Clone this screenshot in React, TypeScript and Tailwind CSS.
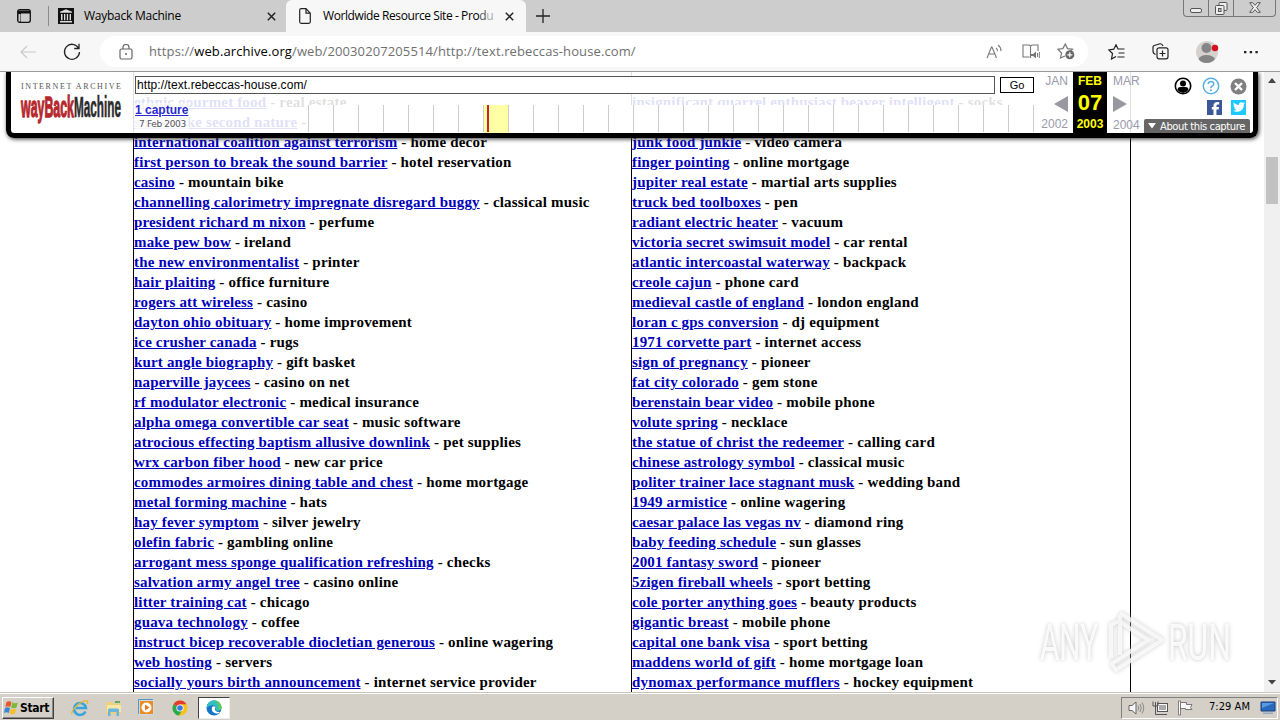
import { FC } from "react";
import { FaFacebookF, FaTwitter } from "react-icons/fa6";

type Entry = [string, string];

const leftLinks: Entry[] = [
  ["ethnic gourmet food", "real estate"],
  ["smells like second nature", "real estate"],
  ["international coalition against terrorism", "home decor"],
  ["first person to break the sound barrier", "hotel reservation"],
  ["casino", "mountain bike"],
  ["channelling calorimetry impregnate disregard buggy", "classical music"],
  ["president richard m nixon", "perfume"],
  ["make pew bow", "ireland"],
  ["the new environmentalist", "printer"],
  ["hair plaiting", "office furniture"],
  ["rogers att wireless", "casino"],
  ["dayton ohio obituary", "home improvement"],
  ["ice crusher canada", "rugs"],
  ["kurt angle biography", "gift basket"],
  ["naperville jaycees", "casino on net"],
  ["rf modulator electronic", "medical insurance"],
  ["alpha omega convertible car seat", "music software"],
  ["atrocious effecting baptism allusive downlink", "pet supplies"],
  ["wrx carbon fiber hood", "new car price"],
  ["commodes armoires dining table and chest", "home mortgage"],
  ["metal forming machine", "hats"],
  ["hay fever symptom", "silver jewelry"],
  ["olefin fabric", "gambling online"],
  ["arrogant mess sponge qualification refreshing", "checks"],
  ["salvation army angel tree", "casino online"],
  ["litter training cat", "chicago"],
  ["guava technology", "coffee"],
  ["instruct bicep recoverable diocletian generous", "online wagering"],
  ["web hosting", "servers"],
  ["socially yours birth announcement", "internet service provider"],
];

const rightLinks: Entry[] = [
  ["insignificant quarrel enthusiast beaver intelligent", "socks"],
  ["winter coat", "travel"],
  ["junk food junkie", "video camera"],
  ["finger pointing", "online mortgage"],
  ["jupiter real estate", "martial arts supplies"],
  ["truck bed toolboxes", "pen"],
  ["radiant electric heater", "vacuum"],
  ["victoria secret swimsuit model", "car rental"],
  ["atlantic intercoastal waterway", "backpack"],
  ["creole cajun", "phone card"],
  ["medieval castle of england", "london england"],
  ["loran c gps conversion", "dj equipment"],
  ["1971 corvette part", "internet access"],
  ["sign of pregnancy", "pioneer"],
  ["fat city colorado", "gem stone"],
  ["berenstain bear video", "mobile phone"],
  ["volute spring", "necklace"],
  ["the statue of christ the redeemer", "calling card"],
  ["chinese astrology symbol", "classical music"],
  ["politer trainer lace stagnant musk", "wedding band"],
  ["1949 armistice", "online wagering"],
  ["caesar palace las vegas nv", "diamond ring"],
  ["baby feeding schedule", "sun glasses"],
  ["2001 fantasy sword", "pioneer"],
  ["5zigen fireball wheels", "sport betting"],
  ["cole porter anything goes", "beauty products"],
  ["gigantic breast", "mobile phone"],
  ["capital one bank visa", "sport betting"],
  ["maddens world of gift", "home mortgage loan"],
  ["dynomax performance mufflers", "hockey equipment"],
];

const CloseX: FC = () => (
  <svg width="9" height="9" viewBox="0 0 9 9" className="shrink-0">
    <path d="M.8.8l7.4 7.4M8.2.8L.8 8.2" stroke="#222" strokeWidth="1.5" />
  </svg>
);

const TabStrip: FC = () => (
  <div className="h-8 shrink-0 bg-[#cdcdcd] flex text-[12px] text-black">
    <div className="w-[48px] flex items-center pl-[17px]">
      <svg width="14" height="14" viewBox="0 0 14 14">
        <rect x=".7" y=".7" width="12.6" height="12.6" rx="2" fill="none" stroke="#111" strokeWidth="1.3" />
        <path d="M1 1.5h12v3H1zM1 4h3v9H1z" fill="#111" />
        <path d="M1.5 5h2v7.5h-2z" fill="#cdcdcd" />
      </svg>
    </div>
    <div className="w-[238px] flex items-center border-l border-[#8c8c8c] my-[6px] pl-[9px]">
      <svg width="16" height="16" viewBox="0 0 16 16" className="shrink-0">
        <path d="M0 0h16v16H0z" fill="#111" />
        <path d="M8 1.3l6 2.5v1H2v-1zM2 13h12v1.5H2zM3 6h1.5v6.3H3zM6 6h1.3v6.3H6zM8.800 6h1.300v6.300H8.800zM11.600 6H13v6.300h-1.400z" fill="#ddd" />
      </svg>
      <span className="ml-[10px] w-[183px] tracking-[-0.25px]">Wayback Machine</span>
      <CloseX />
    </div>
    <div className="w-[240px] bg-[#f7f7f7] rounded-t-[6px] flex items-center pl-[13px]">
      <svg width="12" height="16" viewBox="0 0 12 16" className="shrink-0">
        <path d="M.7 2.200Q.7.700 2.200.700H7l4.300 4.500v8.600q0 1.500-1.500 1.500H2.200Q.7 15.300.7 13.800zM7 .7V5.200h4.300" fill="none" stroke="#222" strokeWidth="1.2" />
      </svg>
      <span className="ml-3 w-[182px] whitespace-nowrap tracking-[-0.41px]">
        Worldwide Resource Site - Pro
        <span className="text-[#555]">d</span>
        <span className="text-[#aaa]">u</span>
      </span>
      <CloseX />
    </div>
    <svg width="14" height="14" viewBox="0 0 14 14" className="mt-[9px] ml-[10px]">
      <path d="M7 0v14M0 7h14" stroke="#222" strokeWidth="1.3" />
    </svg>
    <div className="ml-auto mr-[4px] h-[17px] w-[93px] flex border border-t-0 border-[#777] rounded-b-[4px]">
      <div className="w-[25px] border-r border-[#777] flex justify-center">
        <svg width="12" height="5" viewBox="0 0 12 5" className="mt-2">
          <rect x=".5" y=".5" width="11" height="4" rx="1.5" fill="#eee" stroke="#555" />
        </svg>
      </div>
      <div className="w-[25px] border-r border-[#777] flex justify-center">
        <svg width="13" height="13" viewBox="0 0 13 13" className="mt-[2px]">
          <path d="M4 3V1.500Q4 .5 5 .5h6q1 0 1 1v6q0 1-1 1H9" fill="#eee" stroke="#555" />
          <rect x=".5" y="3.5" width="8.5" height="9" rx="1" fill="#eee" stroke="#555" />
          <rect x="3.5" y="6.5" width="2.5" height="3" fill="#ccc" stroke="#555" />
        </svg>
      </div>
      <div className="flex-1 flex justify-center">
        <svg width="12" height="11" viewBox="0 0 12 11" className="mt-[2px]">
          <path d="M.7.7h3L6 3.300 8.300.7h3L7.700 5.500l3.600 4.800h-3L6 7.700l-2.300 2.600h-3l3.600-4.800z" fill="#eee" stroke="#555" />
        </svg>
      </div>
    </div>
  </div>
);

const Toolbar: FC = () => (
  <div className="h-10 shrink-0 bg-[#f7f7f7] border-b border-[#999] flex items-center">
    <svg width="17" height="14" viewBox="0 0 17 14" className="ml-5">
      <path d="M16 7H1M7 1L1 7l6 6" fill="none" stroke="#c8c8c8" strokeWidth="1.2" />
    </svg>
    <svg width="18" height="18" viewBox="0 0 18 18" className="ml-[26px]">
      <path d="M15.500 5A7.500 7.500 0 1 0 16.500 9M16 .8V5.500h-4.800" fill="none" stroke="#222" strokeWidth="1.3" />
    </svg>
    <div className="ml-[19px] w-[988px] h-[31px] rounded-full bg-white flex items-center">
      <svg width="14" height="16" viewBox="0 0 14 16" className="ml-[19px] shrink-0">
        <rect x="1" y="5" width="12" height="10" rx="1.5" fill="none" stroke="#666" strokeWidth="1.2" />
        <path d="M4 5V3.500a3 3 0 0 1 6 0V5" fill="none" stroke="#666" strokeWidth="1.2" />
        <circle cx="7" cy="10" r="1" fill="#666" />
      </svg>
      <span className="ml-4 w-[837px] text-[13px] text-[#707070] whitespace-nowrap tracking-[0.11px]">
        https://<span className="text-black">web.archive.org</span>/web/20030207205514/http://text.rebeccas-house.com/
      </span>
      <svg width="16" height="15" viewBox="0 0 16 15" className="shrink-0">
        <path d="M1 14L5.500 3h.5l4.500 11M2.800 10h6M10 4q1.500 1 1.500 3M12 1q3 2 3 6" fill="none" stroke="#777" strokeWidth="1.1" />
      </svg>
      <svg width="18" height="16" viewBox="0 0 18 16" className="ml-5 shrink-0">
        <path d="M7.500 13H1V1h6l1.500 1L10 1h6v6M8.500 2v12" fill="none" stroke="#777" strokeWidth="1.1" />
        <path d="M9 10h2l3-2.500v7L11 12H9z" fill="#777" />
        <path d="M15.500 9v4M17.300 8v6" stroke="#777" />
      </svg>
      <svg width="18" height="17" viewBox="0 0 18 17" className="ml-[17px] shrink-0">
        <path d="M8 13l-4.500 2 1-5L.8 6.200l5-.6L8.300 1l2.200 4.600 5 .6-2 2" fill="none" stroke="#777" strokeWidth="1.2" />
        <circle cx="12.8" cy="11.8" r="4.5" fill="#666" />
        <path d="M12.800 9.300v5M10.300 11.800h5" stroke="#fff" strokeWidth="1.2" />
      </svg>
    </div>
    <svg width="18" height="16" viewBox="0 0 18 16" className="ml-5 shrink-0">
      <path d="M8 12.500L3.500 15l1-5.500L.8 6l5-.8L8 .8l2 4.200h6.500M10.500 9h6M9.500 13h7" fill="none" stroke="#222" strokeWidth="1.2" />
    </svg>
    <svg width="17" height="17" viewBox="0 0 17 17" className="ml-[26px] shrink-0">
      <path d="M3.500 11.500Q1 10.500 1 8V4.500Q.8 3 2.300 2.500L8 .8Q10 .5 11 3" fill="none" stroke="#222" strokeWidth="1.2" />
      <rect x="5" y="4.8" width="11" height="11" rx="2" fill="none" stroke="#222" strokeWidth="1.2" />
      <path d="M10.500 7.500v6M7.500 10.500h6" stroke="#222" strokeWidth="1.2" />
    </svg>
    <svg width="24" height="24" viewBox="0 0 24 24" className="ml-[26px] shrink-0">
      <circle cx="12" cy="12" r="11" fill="#d4d1ce" />
      <circle cx="11.5" cy="8" r="5" fill="#858585" />
      <path d="M3.500 19q2-4 8-4t8.500 4q-3 4-8.500 4t-8-4z" fill="#858585" />
      <circle cx="20" cy="8" r="3.2" fill="#d4101c" />
    </svg>
    <svg width="14" height="4" viewBox="0 0 14 4" className="ml-[25px] shrink-0">
      <path d="M0 1h2.400v2.300H0zM5.700 1h2.400v2.300H5.700zM11.400 1h2.400v2.300h-2.400z" fill="#222" />
    </svg>
  </div>
);

const Column: FC<{ links: Entry[] }> = ({ links }) => (
  <div className="border-l border-black pt-5">
    {links.map(([name, topic]) => (
      <div key={name} className="h-5 leading-5 whitespace-nowrap tracking-[0.2px]">
        <span className="text-[#0000bb] underline tracking-[0.16px]">{name}</span> - {topic}
      </div>
    ))}
  </div>
);

const WaybackLogo: FC = () => (
  <svg width="103" height="44" viewBox="0 0 103 44" className="ml-[9px] mt-[9px] shrink-0">
    <text x="1" y="8" fontSize="8" textLength="100" fill="#555" fontFamily="Liberation Serif, serif">
      INTERNET ARCHIVE
    </text>
    <g fontFamily="Liberation Sans, sans-serif" fontWeight="bold" fontSize="14" transform="translate(0 35.5) scale(1 2.1)">
      <text x="1" y="0" textLength="53" lengthAdjust="spacingAndGlyphs" fill="#b5282e" stroke="#b5282e" strokeWidth=".6">
        wayBack
      </text>
      <text x="54" y="0" textLength="47" lengthAdjust="spacingAndGlyphs" fill="#2b2b2b" stroke="#2b2b2b" strokeWidth=".3">
        Machine
      </text>
    </g>
  </svg>
);

const Sparkline: FC = () => (
  <svg width="726" height="28" viewBox="0 0 726 28" className="bg-white">
    <path d="M176 0h25v28h-25z" fill="#ffffa5" />
    {Array.from({ length: 30 }, (_, i) => (
      <path key={i} d={`M${i * 25 + 0.5} 0v27`} stroke="#ccc" />
    ))}
    <path d="M180 0v27" stroke="#c8232c" strokeWidth="2" />
  </svg>
);

const Banner: FC = () => (
  <div className="absolute left-[6px] top-0 w-[1252px] h-[66px] border-[5px] border-t-0 border-black rounded-b-[8px] bg-white/88 shadow-[1px_1px_4px_#333] flex font-['Liberation_Sans',sans-serif]">
    <WaybackLogo />
    <div className="ml-3 w-[900px]">
      <div className="flex pt-1">
        <div className="w-[860px] h-[18px] border border-[#555] bg-white text-[12px] leading-[16px] pl-[1px] text-black tracking-[0.08px]">
          http://text.rebeccas-house.com/
        </div>
        <div className="ml-[5px] mt-[1px] w-[34px] h-[16px] border border-black bg-white text-[11px] leading-[14px] text-center">
          Go
        </div>
      </div>
      <div className="flex">
        <div className="w-[173px] pt-[9px]">
          <div className="w-[54px] bg-white/60">
            <div className="text-[12px] leading-[14px] font-bold underline text-[#2a2acf] whitespace-nowrap">1 capture</div>
            <div className="text-[9px] leading-[15px] pl-[4px] text-[#555] whitespace-nowrap font-['DejaVu_Sans',sans-serif] tracking-[-0.35px]">
              7 Feb 2003
            </div>
          </div>
        </div>
        <div className="pt-[11px]">
          <Sparkline />
        </div>
      </div>
    </div>
    <div className="w-[38px] flex flex-col items-end pr-[5px] text-[12px] leading-[14px] text-[#99a] pt-[2px]">
      <span>JAN</span>
      <svg width="14" height="16" viewBox="0 0 14 16" className="mt-[8px] mb-[5px]">
        <path d="M14 0v16L0 8z" fill="#9898a0" />
      </svg>
      <span>2002</span>
    </div>
    <div className="w-[34px] h-[61px] bg-black text-[#ff0] font-bold text-[12px] leading-[14px] text-center pt-[2px]">
      FEB
      <div className="text-[22px] leading-[29px]">07</div>
      2003
    </div>
    <div className="w-[31px] pl-[6px] text-[12px] leading-[14px] text-[#99a] pt-[2px]">
      MAR
      <svg width="14" height="16" viewBox="0 0 14 16" className="mt-[8px] mb-[6px]">
        <path d="M0 0v16l14-8z" fill="#9898a0" />
      </svg>
      2004
    </div>
    <div className="flex-1 flex flex-col items-end justify-between">
      <div className="flex gap-[10px] pt-[5px] pr-[6px] items-center">
        <svg width="18" height="18" viewBox="0 0 18 18">
          <circle cx="9" cy="9" r="7.7" fill="#fff" stroke="#000" strokeWidth="1.6" />
          <circle cx="9" cy="6.5" r="3" />
          <path d="M3.500 13q0-3 3-3h5q3 0 3 3-2.500 3-5.500 3t-5.500-3z" />
        </svg>
        <svg width="18" height="18" viewBox="0 0 18 18">
          <circle cx="9" cy="9" r="7.7" fill="#fff" stroke="#5aafe5" strokeWidth="1.5" />
          <path d="M6.200 7q.3-2.500 2.800-2.500T11.800 7q0 1.200-1.600 2T9 11.200" fill="none" stroke="#5aafe5" strokeWidth="1.5" />
          <circle cx="9" cy="13.3" r="1" fill="#5aafe5" />
        </svg>
        <svg width="17" height="17" viewBox="0 0 17 17">
          <circle cx="8.5" cy="8.5" r="8" fill="#808080" />
          <path d="M5 5l7 7M12 5l-7 7" stroke="#fff" strokeWidth="2.4" />
        </svg>
      </div>
      <div className="flex gap-[9px] pr-[7px]">
        <div className="w-[15px] h-[15px] bg-[#3b5998] text-white text-[13px] flex items-end justify-end overflow-hidden">
          <FaFacebookF />
        </div>
        <div className="w-[15px] h-[15px] bg-[#1dcaff] text-white text-[12px] grid place-items-center">
          <FaTwitter />
        </div>
      </div>
      <div className="mr-[3px] w-[106px] h-[14px] bg-[#666] rounded-t-[2px] text-white flex items-center text-[10px] pl-[4px] whitespace-nowrap font-['DejaVu_Sans',sans-serif] tracking-[-0.42px]">
        <svg width="8" height="6" viewBox="0 0 8 6" className="mr-[4px]">
          <path d="M0 0h8L4 5.500z" fill="#fff" />
        </svg>
        About this capture
      </div>
    </div>
  </div>
);

const Watermark: FC = () => (
  <svg width="200" height="72" viewBox="0 0 200 72" className="absolute left-[1036px] top-[534px] drop-shadow-[0_0_2px_#bbb]">
    <g fill="none" stroke="#fff" strokeOpacity=".75" strokeWidth="4" strokeLinejoin="round">
      <path d="M75 52V19l8-4M84 9v40M84 7l42 27-46 30-4-6 4-3 32-21-28-18" />
    </g>
    <g fill="#fff" fillOpacity=".85" fontFamily="Roboto, sans-serif" fontSize="38" transform="translate(0 54) scale(1 1.32)">
      <text x="4" y="0" textLength="58" lengthAdjust="spacingAndGlyphs">ANY</text>
      <text x="132" y="0" textLength="63" lengthAdjust="spacingAndGlyphs">RUN</text>
    </g>
  </svg>
);

const Scrollbar: FC = () => (
  <div className="absolute right-0 top-0 w-4 h-full bg-[#f0f0f0] flex flex-col items-center">
    <svg width="8" height="5" viewBox="0 0 8 5" className="mt-[6px]">
      <path d="M0 5l4-5 4 5z" fill="#444" />
    </svg>
    <div className="mt-[74px] w-[12px] h-[47px] bg-[#c2c2c2]" />
    <svg width="8" height="5" viewBox="0 0 8 5" className="mt-auto mb-[7px]">
      <path d="M0 0l4 4.500L8 0z" fill="#444" />
    </svg>
  </div>
);

const Taskbar: FC = () => (
  <div className="h-7 shrink-0 bg-[#d4d0c8] border-t border-[#c8c4bc] shadow-[inset_0_1px_0_#fff] flex items-center pl-[2px] pt-[2px] text-black">
    <div className="w-[52px] h-[22px] border border-white border-r-[#404040] border-b-[#404040] shadow-[inset_-1px_-1px_0_#888] flex items-center pl-[1px] text-[12px] font-bold font-['DejaVu_Sans_Condensed','DejaVu_Sans',sans-serif] tracking-[-0.3px]">
      <svg width="15" height="15" viewBox="0 0 15 15" className="mr-[1px] shrink-0">
        <path d="M2.500 2Q5 .5 7.500 2L6.300 7Q4 5.500 1.300 7z" fill="#e8562a" />
        <path d="M8.300 2.500q2.500 1.500 5.500 0l-1.300 5q-2.800 1.300-5.400 0z" fill="#7cb83c" />
        <path d="M1 8q2.500-1.500 5 0l-1.200 5Q2.500 11.500 0 13z" fill="#3a86d4" />
        <path d="M6.800 8.500q2.700 1.300 5.400 0l-1.300 5q-2.500 1.300-5.300 0z" fill="#f6bf26" />
      </svg>
      Start
    </div>
    <svg width="18" height="18" viewBox="0 0 18 18" className="ml-[17px]">
      <path d="M14.500 12.500A6 6 0 1 1 15 9H5" fill="none" stroke="#38a4dc" strokeWidth="2.5" />
      <path d="M1 15Q0 12 6 6.500T16.500 2q.8 1-.8 3" fill="none" stroke="#e9b532" strokeWidth="1.3" />
    </svg>
    <svg width="18" height="18" viewBox="0 0 18 18" className="ml-4">
      <path d="M1 3h6l1 1.500h8V15H1z" fill="#ecd07a" />
      <path d="M2 6h14v7H2z" fill="#f7e7a6" />
      <path d="M3 17v-6q0-1.500 1.500-1.500h8Q14 9.500 14 11v6h-2.500v-4h-6v4z" fill="#68b5de" />
      <path d="M10 2h5v2h-5z" fill="#63a95c" />
    </svg>
    <svg width="17" height="17" viewBox="0 0 17 17" className="ml-[15px]">
      <path d="M.5.5h14v14H.5z" fill="#87b9dd" stroke="#5c93be" />
      <rect x="1.5" y="1.5" width="14" height="14" fill="#f08a1c" stroke="#c6dcec" />
      <circle cx="8.5" cy="8.5" r="5" fill="#fff" />
      <path d="M7 5.500v6l4.500-3z" fill="#e9771a" />
    </svg>
    <svg width="16" height="16" viewBox="0 0 16 16" className="ml-[17px]">
      <circle cx="8" cy="8" r="7.5" fill="#fbc116" />
      <path d="M8 8L1.500 4.200A7.500 7.500 0 0 1 14.500 4.300H8z" fill="#e33b2e" />
      <path d="M8 8L1.500 4.200A7.500 7.500 0 0 0 7 15.500l3-5z" fill="#2da94f" />
      <circle cx="8" cy="8" r="3.6" fill="#fff" />
      <circle cx="8" cy="8" r="2.8" fill="#3b79e1" />
    </svg>
    <div className="ml-[10px] w-[32px] h-[22px] bg-white border border-[#404040] border-r-[#eee] border-b-[#eee] grid place-items-center">
      <svg width="16" height="16" viewBox="0 0 16 16">
        <circle cx="8" cy="8" r="7.5" fill="#1673c6" />
        <path d="M.5 8A7.500 7.500 0 0 1 15.500 7.500q0 3-3.500 3.200-3 0-2.300-2Q10.200 6 7 5.300T.5 8z" fill="#31bfc3" />
        <path d="M6 7q-1.500 5 4 6.500 2.500.3 4-1.500-4 .5-5-2-.3-1.500.5-2.500Q8 5.500 6 7z" fill="#fff" />
        <path d="M8 .5q6.500 0 7.500 6.500 0 3-3.500 3.500Q14 4 8 .5z" fill="#61c95d" />
      </svg>
    </div>
    <div className="ml-auto mr-[2px] w-[157px] h-[22px] border border-[#808080] border-r-white border-b-white flex items-center pl-[6px]">
      <svg width="17" height="16" viewBox="0 0 17 16" className="shrink-0">
        <path d="M1 5.500h3L8 2v12l-4-3.500H1z" fill="#f6f6f6" stroke="#666" />
        <path d="M10 5.500q1.500 2.500 0 5M12 4q2.500 4 0 8M14 2.500q3.500 5.500 0 11" fill="none" stroke="#888" />
      </svg>
      <svg width="17" height="16" viewBox="0 0 17 16" className="ml-[7px] shrink-0">
        <rect x="5.5" y="3.5" width="10" height="8" fill="#aaa" stroke="#555" />
        <path d="M6.500 4.500h8v6h-8z" fill="none" stroke="#fff" />
        <path d="M7 14.500h8M3.500 8v6.500H8" stroke="#555" fill="none" />
        <path d="M1 1.500V6h5V1.500M3.500 2v6" stroke="#555" fill="none" />
      </svg>
      <svg width="17" height="16" viewBox="0 0 17 16" className="ml-[8px] shrink-0">
        <path d="M3.500 2.500h6v2h5.500l-1.500 3 1.500 2H8.500v-1h-5z" fill="#f8f8f8" stroke="#777" />
        <path d="M1.500 1h2v14h-2z" fill="#fff" stroke="#666" strokeWidth=".8" />
      </svg>
      <span className="ml-[15px] w-[51px] text-[11px] whitespace-nowrap font-['DejaVu_Sans_Condensed','DejaVu_Sans',sans-serif] tracking-[0.05px]">
        7:29 AM
      </span>
      <svg width="16" height="14" viewBox="0 0 16 14" className="shrink-0">
        <path d="M1 1h14v9H1z" fill="#2869be" stroke="#173f7c" />
        <path d="M2 2h12L2 7z" fill="#5a9ae2" />
        <path d="M3 11.500h10v1.500H3z" fill="#90a8c2" />
      </svg>
    </div>
  </div>
);

const App: FC = () => {
  return (
    <div className="w-[1280px] h-[720px] overflow-hidden flex flex-col bg-white font-['Open_Sans',sans-serif]">
      <TabStrip />
      <Toolbar />
      <div className="relative flex-1 min-h-0 overflow-hidden">
        <div className="ml-[133px] w-[998px] grid grid-cols-[498px_500px] border-r border-black text-[15px] font-bold text-black font-['Liberation_Serif',serif]">
          <Column links={leftLinks} />
          <Column links={rightLinks} />
        </div>
        <Banner />
        <Watermark />
        <Scrollbar />
      </div>
      <Taskbar />
    </div>
  );
};

export default App;
